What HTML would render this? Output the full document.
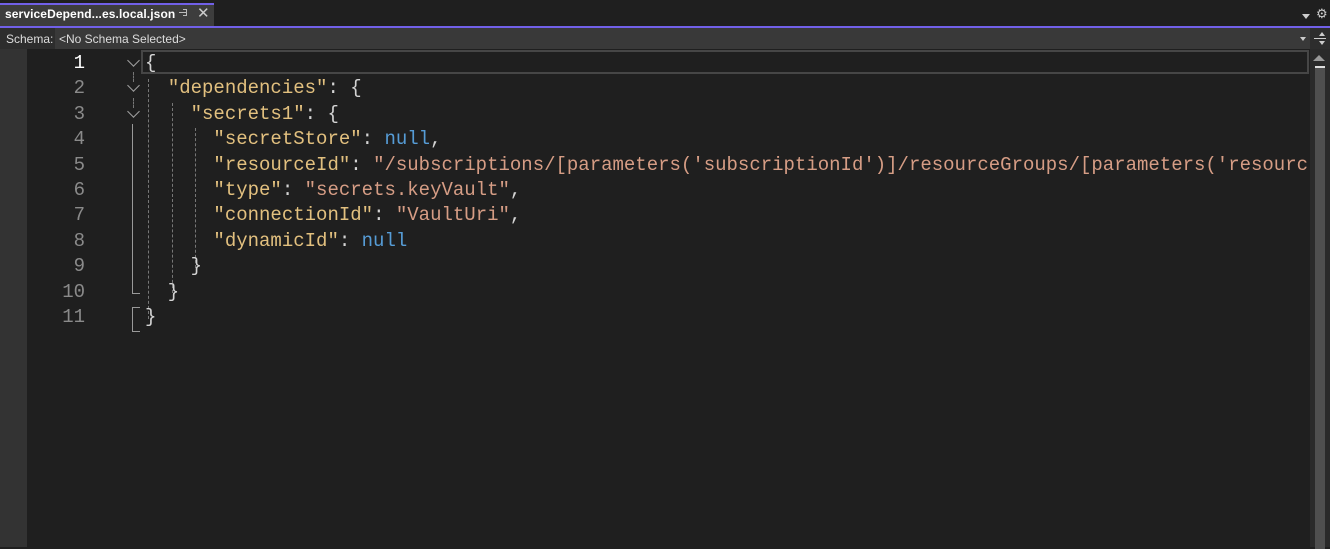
<!DOCTYPE html>
<html><head><meta charset="utf-8"><style>
body{margin:0;width:1330px;height:547px;background:#1f1f1f;overflow:hidden;position:relative;font-family:"Liberation Sans",sans-serif}
.abs{position:absolute}
.code{font-family:"Liberation Mono",monospace;font-size:19px;white-space:pre;line-height:25.4px;height:25.4px}
.k{color:#e2c07f}.s{color:#d69d85}.n{color:#569cd6}.p{color:#d4d4d4}
.ln{font-family:"Liberation Mono",monospace;font-size:19px;color:#8a8a8a;text-align:right;width:58px;line-height:25.4px}
.chev{width:8px;height:8px;border-right:1.5px solid #a0a0a0;border-bottom:1.5px solid #a0a0a0;transform:rotate(45deg)}
.dv{border-left:1px dashed #777}
</style></head><body>
<div class="abs" style="left:0;top:0;width:1330px;height:26px;background:#1f1f1f"></div>
<div class="abs" style="left:0;top:3px;width:214px;height:23px;background:#3d3d3d;border-top:2px solid #7160e8;box-sizing:border-box"></div>
<div class="abs" style="left:5px;top:7px;font-size:12px;font-weight:bold;color:#fff;letter-spacing:0.1px">serviceDepend...es.local.json</div>
<div class="abs" style="left:179px;top:12px;width:8px;height:1px;background:#bbb"></div>
<div class="abs" style="left:183px;top:9px;width:4px;height:7px;border:1px solid #bbb;border-left:none;box-sizing:border-box"></div>
<div class="abs" style="left:197px;top:4px;font-size:15px;color:#ccc">✕</div>
<div class="abs" style="left:1302px;top:14px;width:0;height:0;border-left:4px solid transparent;border-right:4px solid transparent;border-top:5px solid #ccc"></div>
<div class="abs" style="left:1316px;top:6px;font-size:13px;color:#ccc">⚙</div>
<div class="abs" style="left:0;top:26px;width:1330px;height:2px;background:#7160e8"></div>
<div class="abs" style="left:0;top:28px;width:1330px;height:21px;background:#2d2d2d"></div>
<div class="abs" style="left:55px;top:28px;width:1255px;height:21px;background:#393939"></div>
<div class="abs" style="left:6px;top:32px;font-size:12px;color:#ddd">Schema:</div>
<div class="abs" style="left:59px;top:32px;font-size:12px;color:#ddd">&lt;No Schema Selected&gt;</div>
<div class="abs" style="left:1300px;top:37px;width:0;height:0;border-left:3.5px solid transparent;border-right:3.5px solid transparent;border-top:4px solid #ccc"></div>
<div class="abs" style="left:1314px;top:38px;width:12px;height:1px;background:#ccc"></div>
<div class="abs" style="left:1319px;top:32px;width:0;height:0;border-left:3px solid transparent;border-right:3px solid transparent;border-bottom:4px solid #ccc"></div>
<div class="abs" style="left:1319px;top:41px;width:0;height:0;border-left:3px solid transparent;border-right:3px solid transparent;border-top:4px solid #ccc"></div>
<div class="abs" style="left:0;top:49px;width:27px;height:498px;background:#333"></div>
<div class="abs" style="left:1310px;top:49px;width:20px;height:498px;background:#2a2a2a"></div>
<div class="abs" style="left:1313px;top:55px;width:0;height:0;border-left:6px solid transparent;border-right:6px solid transparent;border-bottom:6px solid #999"></div>
<div class="abs" style="left:1315px;top:66px;width:10px;height:481px;background:#4f4f4f;border-top:2px solid #ddd"></div>
<div class="abs" style="left:141px;top:50px;width:1168px;height:24px;border:2px solid #464646;box-sizing:border-box"></div>
<div class="abs" style="left:27px;top:51px">
<div class="ln" style="color:#fff">1</div><div class="ln">2</div><div class="ln">3</div><div class="ln">4</div><div class="ln">5</div><div class="ln">6</div><div class="ln">7</div><div class="ln">8</div><div class="ln">9</div><div class="ln">10</div><div class="ln">11</div>
</div>
<div class="abs chev" style="left:129px;top:56px"></div>
<div class="abs chev" style="left:129px;top:81px"></div>
<div class="abs chev" style="left:129px;top:107px"></div>
<div class="abs dv" style="left:133px;top:72px;height:10px"></div>
<div class="abs dv" style="left:133px;top:98px;height:10px"></div>
<div class="abs" style="left:132px;top:124px;height:169px;border-left:1.5px solid #999;width:7px;border-bottom:1.5px solid #999"></div>
<div class="abs" style="left:132px;top:307px;height:23px;border-left:1.5px solid #999;width:7px;border-bottom:1.5px solid #999;border-top:1.5px solid #999"></div>
<div class="abs dv" style="left:148px;top:79px;height:240px"></div>
<div class="abs dv" style="left:172px;top:103px;height:190px"></div>
<div class="abs dv" style="left:195px;top:128px;height:140px"></div>
<div class="abs" style="left:145px;top:51px">
<div class="code p">{</div>
<div class="code">  <span class="k">"dependencies"</span><span class="p">: {</span></div>
<div class="code">    <span class="k">"secrets1"</span><span class="p">: {</span></div>
<div class="code">      <span class="k">"secretStore"</span><span class="p">: </span><span class="n">null</span><span class="p">,</span></div>
<div class="code" style="width:1163px;overflow:hidden">      <span class="k">"resourceId"</span><span class="p">: </span><span class="s">"/subscriptions/[parameters('subscriptionId')]/resourceGroups/[parameters('resourceGroupName')]"</span></div>
<div class="code">      <span class="k">"type"</span><span class="p">: </span><span class="s">"secrets.keyVault"</span><span class="p">,</span></div>
<div class="code">      <span class="k">"connectionId"</span><span class="p">: </span><span class="s">"VaultUri"</span><span class="p">,</span></div>
<div class="code">      <span class="k">"dynamicId"</span><span class="p">: </span><span class="n">null</span></div>
<div class="code p">    }</div>
<div class="code p">  }</div>
<div class="code p">}</div>
</div>
</body></html>
